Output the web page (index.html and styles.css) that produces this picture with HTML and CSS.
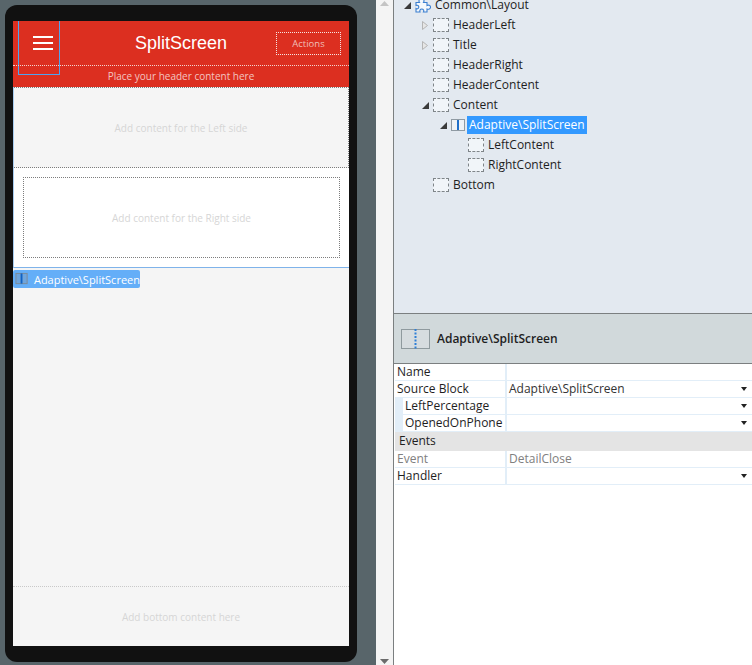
FILE: index.html
```html
<!DOCTYPE html>
<html lang="en">
<head>
    <meta charset="UTF-8">
    <title>SplitScreen</title>
    <link rel="stylesheet" href="styles.css">
</head>
<body>
    <div class="stage">
        <div class="phone">
            <div class="screen">
                <div class="menu-outline"></div>
                <div class="app-header">
                    <div class="header-top">
                        <div class="burger"><span></span><span></span><span></span></div>
                        <div class="title">SplitScreen</div>
                        <div class="actions">Actions</div>
                    </div>
                    <div class="header-content">Place your header content here</div>
                </div>
                <div class="split">
                    <div class="left-side">Add content for the Left side</div>
                    <div class="right-side">
                        <div class="right-box">Add content for the Right side</div>
                    </div>
                </div>
                <div class="content-fill">
                    <div class="block-tag">
                        <svg width="16" height="14" viewBox="0 0 16 14"><rect x="1" y="1" width="12" height="11" fill="#6fa5dc" stroke="#7d8a96"/><rect x="6" y="1" width="2" height="11" fill="#0f62c4"/></svg>
                        <span>Adaptive\SplitScreen</span>
                    </div>
                </div>
                <div class="bottom-area">Add bottom content here</div>
            </div>
        </div>
    </div>
    <div class="scrollbar">
        <svg width="9" height="5" viewBox="0 0 9 5"><path d="M4.500 0 9 5H0z" fill="#c4c4c4"/></svg>
        <svg width="9" height="5" viewBox="0 0 9 5"><path d="M0 0h9L4.500 5z" fill="#6b6b6b"/></svg>
    </div>
    <div class="side">
        <div class="tree">
            <div class="row lvl0">
                <i class="arrow"><svg width="7" height="7" viewBox="0 0 7 7"><path d="M7 0v7H0z" fill="#3a3a3a"/></svg></i>
                <svg class="puzzle" width="16" height="16" viewBox="0 0 16 16"><path d="M1 5.500h3.500c-1-1.500-.5-4 1.800-4.300 2.700-.2 3.200 2.700 2.200 4.300H12v3c1.500-.8 3.500-.2 3.500 1.700s-2 2.500-3.500 1.800V15H8.500c.7-1.500 0-3-1.700-3S4.500 13.500 5 15H1v-3.500c1.500.8 2.800 0 2.800-1.500S2.500 7.800 1 8.500z" fill="#f4f8fc" stroke="#3b7fd0" stroke-width="1.100"/></svg>
                <span class="txt">Common\Layout</span>
            </div>
            <div class="row lvl1">
                <i class="arrow"><svg class="closed" width="6" height="9" viewBox="0 0 6 9"><path d="M.5.500l5 4-5 4z" fill="#e6e6e6" stroke="#b5b5b5"/></svg></i>
                <i class="ph"></i><span class="txt">HeaderLeft</span>
            </div>
            <div class="row lvl1">
                <i class="arrow"><svg class="closed" width="6" height="9" viewBox="0 0 6 9"><path d="M.5.500l5 4-5 4z" fill="#e6e6e6" stroke="#b5b5b5"/></svg></i>
                <i class="ph"></i><span class="txt">Title</span>
            </div>
            <div class="row lvl1"><i class="arrow"></i><i class="ph"></i><span class="txt">HeaderRight</span></div>
            <div class="row lvl1"><i class="arrow"></i><i class="ph"></i><span class="txt">HeaderContent</span></div>
            <div class="row lvl1">
                <i class="arrow"><svg width="7" height="7" viewBox="0 0 7 7"><path d="M7 0v7H0z" fill="#3a3a3a"/></svg></i>
                <i class="ph"></i><span class="txt">Content</span>
            </div>
            <div class="row lvl2">
                <i class="arrow"><svg width="7" height="7" viewBox="0 0 7 7"><path d="M7 0v7H0z" fill="#3a3a3a"/></svg></i>
                <svg class="split-icon" width="14" height="12" viewBox="0 0 14 12"><rect x=".5" y=".5" width="13" height="11" fill="#eef2f6" stroke="#8f9aa3"/><rect x="6" y="1" width="2" height="10" fill="#1f6fc9"/></svg>
                <span class="txt selected">Adaptive\SplitScreen</span>
            </div>
            <div class="row lvl3"><i class="ph"></i><span class="txt">LeftContent</span></div>
            <div class="row lvl3"><i class="ph"></i><span class="txt">RightContent</span></div>
            <div class="row lvl1"><i class="arrow"></i><i class="ph"></i><span class="txt">Bottom</span></div>
        </div>
        <div class="prop-head">
            <svg width="30" height="22" viewBox="0 0 30 22"><rect x=".5" y="1.500" width="28" height="19" fill="#d6dcdf" stroke="#8f9a9e"/><path d="M14.500 1v20" stroke="#2f7fd6" stroke-width="2" stroke-dasharray="2 1.500"/></svg>
            <span>Adaptive\SplitScreen</span>
        </div>
        <div class="props">
            <div class="prop"><div class="key">Name</div><div class="val"></div></div>
            <div class="prop"><div class="key">Source Block</div><div class="val">Adaptive\SplitScreen<b class="drop"></b></div></div>
            <div class="prop sub"><div class="key">LeftPercentage</div><div class="val"><b class="drop"></b></div></div>
            <div class="prop sub"><div class="key">OpenedOnPhone</div><div class="val"><b class="drop"></b></div></div>
            <div class="group">Events</div>
            <div class="prop muted"><div class="key">Event</div><div class="val">DetailClose</div></div>
            <div class="prop"><div class="key">Handler</div><div class="val"><b class="drop"></b></div></div>
        </div>
    </div>
</body>
</html>
```

FILE: styles.css
```css
*{
    margin: 0;
    padding: 0;
    box-sizing: border-box;
}
body{
    display: flex;
    width: 752px;
    height: 665px;
    overflow: hidden;
    background: #58656a;
    font-family: "Open Sans", sans-serif;
    font-size: 12px;
    color: #1e1e1e;
}
.stage{
    width: 376px;
    height: 665px;
    padding: 5px 19px 3px 5px;
}
.phone{
    height: 100%;
    background: #111;
    border-radius: 12px;
    padding: 16px 8px;
}
.screen{
    position: relative;
    height: 100%;
    display: flex;
    flex-direction: column;
    background: #f5f5f5;
    font-size: 10px;
}

/* app header */
.menu-outline{
    position: absolute;
    left: 5px;
    top: 0;
    width: 42px;
    height: 54px;
    border: 1px solid #4ea3f0;
    border-top: none;
}
.app-header{
    height: 66px;
    background: #dc2f20;
    color: #fff;
}
.header-top{
    position: relative;
    height: 45px;
    display: flex;
    align-items: center;
    justify-content: center;
    border-bottom: 1px dotted #f3d3cf;
}
.burger{
    position: absolute;
    left: 20px;
    top: 15px;
    width: 20px;
    display: flex;
    flex-direction: column;
    gap: 4px;
}
.burger span{
    height: 2px;
    background: #fff;
}
.title{
    font-family: "Liberation Sans", sans-serif;
    font-size: 18px;
}
.actions{
    position: absolute;
    right: 8px;
    top: 11px;
    width: 65px;
    height: 23px;
    border: 1px dotted #f5e4e2;
    color: #f0bfb9;
    font-size: 9.500px;
    line-height: 21px;
    text-align: center;
}
.header-content{
    text-align: center;
    line-height: 21px;
    color: #f3c5c0;
}

/* split placeholder */
.split{
    border-left: 1px solid #a9cdf0;
    border-bottom: 1px solid #7fb3ea;
}
.left-side{
    height: 81px;
    display: flex;
    align-items: center;
    justify-content: center;
    border: 1px dotted #7d7d7d;
    border-left: none;
    color: #d6d6d6;
}
.right-side{
    height: 99px;
    background: #fff;
    padding: 9px 9px 9px 9px;
}
.right-box{
    height: 81px;
    display: flex;
    align-items: center;
    justify-content: center;
    border: 1px dotted #7d7d7d;
    color: #d6d6d6;
}
.content-fill{
    flex: 1;
    padding-top: 2px;
}
.block-tag{
    width: 127px;
    height: 18px;
    display: flex;
    align-items: center;
    gap: 4px;
    padding-left: 2px;
    background: #64aef8;
    border-radius: 2px;
    color: #fff;
    font-size: 11px;
}
.bottom-area{
    height: 60px;
    display: flex;
    align-items: center;
    justify-content: center;
    border-top: 1px dotted #c9c9c9;
    color: #d6d6d6;
}

/* scrollbar between canvas and side panel */
.scrollbar{
    width: 17px;
    height: 665px;
    display: flex;
    flex-direction: column;
    justify-content: space-between;
    align-items: center;
    padding: 1px 0;
    background: #f4f4f4;
}

/* side panel */
.side{
    flex: 1;
    display: flex;
    flex-direction: column;
    border-left: 1px solid #7b7f80;
    background: #fff;
}
.tree{
    height: 313px;
    padding-top: 0;
    background: #e3e9f0;
    overflow: hidden;
}
.tree .lvl0{
    margin-top: -5px;
}
.row{
    height: 20px;
    display: flex;
    align-items: center;
}
.lvl0{ padding-left: 8px; }
.lvl1{ padding-left: 26px; }
.lvl2{ padding-left: 44px; }
.lvl3{ padding-left: 74px; }
.lvl0 .txt, .lvl1 .txt, .lvl3 .txt{
    margin-left: 4px;
}
.arrow{
    width: 13px;
    height: 20px;
    display: flex;
    align-items: center;
    justify-content: flex-start;
    padding-left: 2px;
}
.ph{
    width: 16px;
    height: 14px;
    border: 1px dashed #7f8589;
    background: #f1f5f9;
}
.split-icon{
    margin-right: 2px;
}
.txt{
    line-height: 18px;
    padding: 0 2px 0 0;
}
.selected{
    background: #3399ff;
    color: #fff;
    padding: 0 2px;
}
.prop-head{
    height: 51px;
    display: flex;
    align-items: center;
    gap: 6px;
    padding-left: 7px;
    background: #d1d9db;
    border-top: 1px solid #7b7f80;
    border-bottom: 1px solid #7b7f80;
    font-weight: 600;
}
.prop{
    height: 17px;
    display: flex;
    padding-left: 1px;
    line-height: 16px;
}
.key{
    width: 110px;
    padding-left: 2px;
    border-bottom: 1px solid #e2eef8;
}
.val{
    position: relative;
    flex: 1;
    padding-left: 2px;
    border-left: 2px solid #e2eef8;
    border-bottom: 1px solid #e2eef8;
    color: #333;
}
.sub .key{
    padding-left: 10px;
    border-left: 8px solid #e2eef8;
    padding-left: 2px;
}
.drop{
    position: absolute;
    right: 5px;
    top: 6px;
    border-left: 3px solid transparent;
    border-right: 3px solid transparent;
    border-top: 4px solid #222;
}
.group{
    height: 19px;
    margin-left: 1px;
    padding-left: 4px;
    background: #e4e4e4;
    line-height: 18px;
}
.muted .key, .muted .val{
    color: #808080;
}
```
